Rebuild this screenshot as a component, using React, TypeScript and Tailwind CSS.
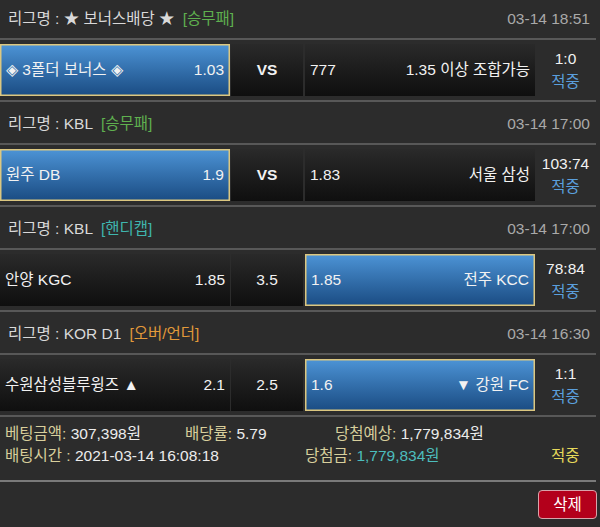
import React from "react";

const FONT = { fontFamily: '"Liberation Sans", "Noto Sans CJK KR", sans-serif' };

type Side = { name: string; odds: string; selected?: boolean };
type Match = {
  league: string;
  type: string;
  typeColor: string;
  date: string;
  home: Side;
  mid: string;
  midBold?: boolean;
  away: Side;
  score: string;
};

const matches: Match[] = [
  {
    league: "★ 보너스배당 ★",
    type: "[승무패]",
    typeColor: "text-[#5fb04f]",
    date: "03-14 18:51",
    home: { name: "◈ 3폴더 보너스 ◈", odds: "1.03", selected: true },
    mid: "VS",
    midBold: true,
    away: { name: "1.35 이상 조합가능", odds: "777" },
    score: "1:0",
  },
  {
    league: "KBL",
    type: "[승무패]",
    typeColor: "text-[#5fb04f]",
    date: "03-14 17:00",
    home: { name: "원주 DB", odds: "1.9", selected: true },
    mid: "VS",
    midBold: true,
    away: { name: "서울 삼성", odds: "1.83" },
    score: "103:74",
  },
  {
    league: "KBL",
    type: "[핸디캡]",
    typeColor: "text-[#3fb6ae]",
    date: "03-14 17:00",
    home: { name: "안양 KGC", odds: "1.85" },
    mid: "3.5",
    away: { name: "전주 KCC", odds: "1.85", selected: true },
    score: "78:84",
  },
  {
    league: "KOR D1",
    type: "[오버/언더]",
    typeColor: "text-[#e29a3a]",
    date: "03-14 16:30",
    home: { name: "수원삼성블루윙즈 ▲", odds: "2.1" },
    mid: "2.5",
    away: { name: "▼ 강원 FC", odds: "1.6", selected: true },
    score: "1:1",
  },
];

function Cell({
  left,
  right,
  selected,
}: {
  left: string;
  right: string;
  selected?: boolean;
}) {
  const cls = selected
    ? "bg-gradient-to-b from-[#4c93d5] to-[#1b4d84] border border-[#dcc780] shadow-[inset_0_0_0_0.5px_#dcc780]"
    : "bg-gradient-to-b from-[#2a2a2a] to-[#0f0f0f]";
  return (
    <div
      className={`w-[230px] h-[52px] flex items-center justify-between px-[5px] text-[15.5px] text-[#f2f2f2] ${cls}`}
    >
      <span>{left}</span>
      <span>{right}</span>
    </div>
  );
}

function Section({ m, first }: { m: Match; first: boolean }) {
  return (
    <div>
      <div
        className={`${first ? "h-[38px]" : "h-[41px] pt-[3px]"} flex items-center justify-between pl-[8px] pr-[6px] w-[596px] text-[15.5px]`}
      >
        <div className="text-[#d9d9d9]">
          리그명 : {m.league}
          <span className={`ml-[8px] ${m.typeColor}`}>{m.type}</span>
        </div>
        <div className="text-[#a9a9a9]">{m.date}</div>
      </div>
      <div className="h-[2px] w-[596px] bg-[#585858]" />
      <div className="h-[60px] pt-[4px] flex">
        <Cell left={m.home.name} right={m.home.odds} selected={m.home.selected} />
        <div
          className={`ml-[1px] w-[72px] h-[52px] flex items-center justify-center bg-gradient-to-b from-[#2a2a2a] to-[#0f0f0f] text-[15.5px] text-[#f2f2f2] ${m.midBold ? "font-bold" : ""}`}
        >
          {m.mid}
        </div>
        <div className="ml-[2px]">
          <Cell left={m.away.odds} right={m.away.name} selected={m.away.selected} />
        </div>
        <div className="w-[61px] h-[52px] flex flex-col items-center justify-center text-[15.5px] leading-[23px]">
          <span className="text-[#f2f2f2]">{m.score}</span>
          <span className="text-[#5a9fdc]">적중</span>
        </div>
      </div>
      <div className="h-[2px] w-[596px] bg-[#585858]" />
    </div>
  );
}

export default function App() {
  return (
    <div style={FONT} className="w-[600px] h-[527px] bg-[#2c2c2c] overflow-hidden">
      {matches.map((m, i) => (
        <Section key={i} m={m} first={i === 0} />
      ))}
      <div className="-mt-[2px] h-[65px] pt-[8px] text-[15.5px] leading-[22px]">
        <div className="flex">
          <div className="w-[185px] pl-[5px]">
            <span className="text-[#d8cf9c]">베팅금액:</span>
            <span className="text-[#ececec]"> 307,398원</span>
          </div>
          <div className="w-[150px]">
            <span className="text-[#d8cf9c]">배당률:</span>
            <span className="text-[#ececec]"> 5.79</span>
          </div>
          <div>
            <span className="text-[#d8cf9c]">당첨예상:</span>
            <span className="text-[#ececec]"> 1,779,834원</span>
          </div>
        </div>
        <div className="flex">
          <div className="w-[305px] pl-[5px]">
            <span className="text-[#d8cf9c]">배팅시간 :</span>
            <span className="text-[#ececec]"> 2021-03-14 16:08:18</span>
          </div>
          <div className="w-[246px]">
            <span className="text-[#d8cf9c]">당첨금:</span>
            <span className="text-[#4cbdbd]"> 1,779,834원</span>
          </div>
          <div className="text-[#e5d95a]">적중</div>
        </div>
      </div>
      <div className="h-[2px] w-[596px] bg-[#7a7a7a]" />
      <div className="flex justify-end pr-[3px] pt-[8px]">
        <button className="w-[59px] h-[29px] rounded-[4px] bg-[#b3001b] border border-[#d8a3aa] text-white text-[15.5px] flex items-center justify-center">
          삭제
        </button>
      </div>
    </div>
  );
}
